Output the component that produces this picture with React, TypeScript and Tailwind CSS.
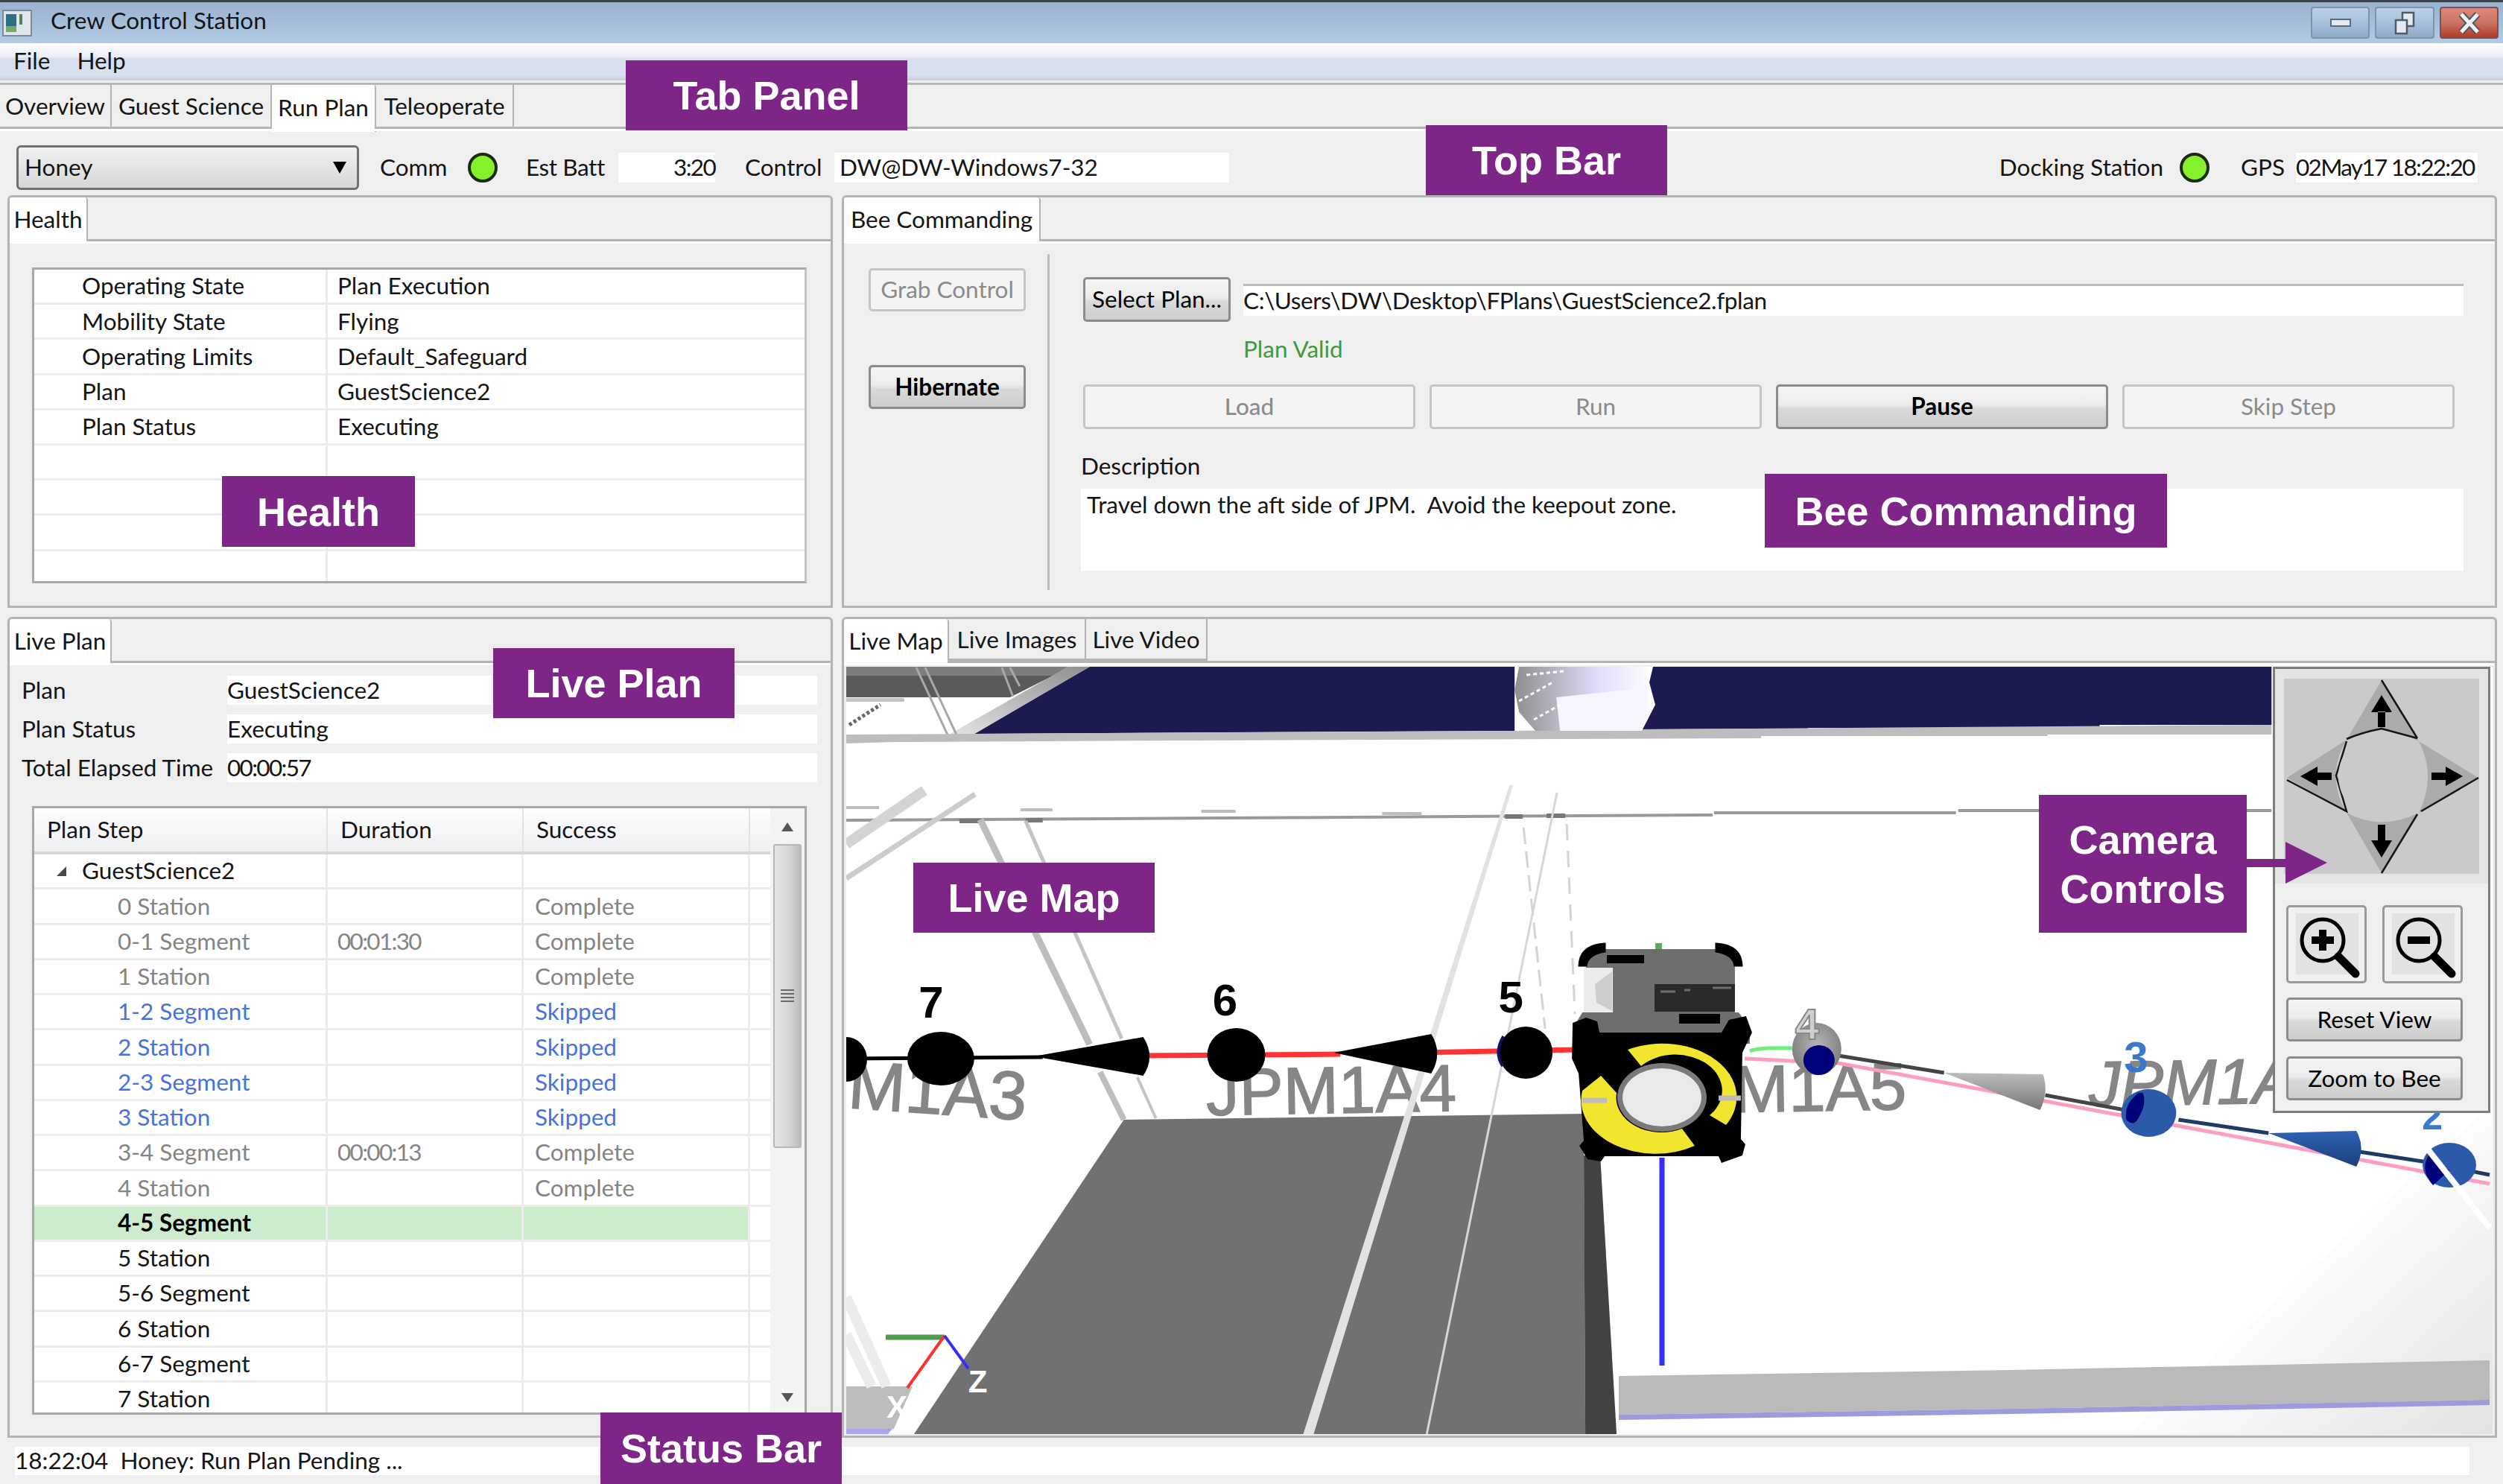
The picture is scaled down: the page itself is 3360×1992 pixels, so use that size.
import React from 'react';

type Tone = 'black' | 'gray' | 'blue' | 'active';

interface Step {
  name: string;
  duration?: string;
  success?: string;
  tone: Tone;
}

const healthRows = [
  ['Operating State', 'Plan Execution'],
  ['Mobility State', 'Flying'],
  ['Operating Limits', 'Default_Safeguard'],
  ['Plan', 'GuestScience2'],
  ['Plan Status', 'Executing'],
  ['', ''],
  ['', ''],
  ['', ''],
  ['', ''],
];

const steps: Step[] = [
  { name: '0 Station', success: 'Complete', tone: 'gray' },
  { name: '0-1 Segment', duration: '00:01:30', success: 'Complete', tone: 'gray' },
  { name: '1 Station', success: 'Complete', tone: 'gray' },
  { name: '1-2 Segment', success: 'Skipped', tone: 'blue' },
  { name: '2 Station', success: 'Skipped', tone: 'blue' },
  { name: '2-3 Segment', success: 'Skipped', tone: 'blue' },
  { name: '3 Station', success: 'Skipped', tone: 'blue' },
  { name: '3-4 Segment', duration: '00:00:13', success: 'Complete', tone: 'gray' },
  { name: '4 Station', success: 'Complete', tone: 'gray' },
  { name: '4-5 Segment', tone: 'active' },
  { name: '5 Station', tone: 'black' },
  { name: '5-6 Segment', tone: 'black' },
  { name: '6 Station', tone: 'black' },
  { name: '6-7 Segment', tone: 'black' },
  { name: '7 Station', tone: 'black' },
];

const toneClass: Record<Tone, string> = {
  black: 'text-[#151515]',
  gray: 'text-[#858585]',
  blue: 'text-[#4673e0]',
  active: 'text-black font-bold bg-[#cdeccd]',
};

const Tab = ({ label, active, w }: { label: string; active?: boolean; w: string }) => (
  <div
    className={`${w} flex items-center justify-center whitespace-nowrap border-r-[2px] border-[#b4b4b4] ${
      active ? 'bg-white h-[calc(100%+4px)] pb-[1px] rounded-t-[4px] self-start' : 'h-full pt-[2px] border-b-[3px] bg-[#efefef]'
    }`}
  >
    {label}
  </div>
);

const Panel = ({
  tabs,
  className,
  children,
}: {
  tabs: { label: string; w: string }[];
  className: string;
  children: React.ReactNode;
}) => (
  <div className={`${className} flex flex-col border-[3px] border-[#b4b4b4] rounded-t-[6px] bg-[#efefef]`}>
    <div className="flex h-[59px] shrink-0 border-b-[3px] border-[#b4b4b4]">
      {tabs.map((t, i) => (
        <Tab key={t.label} label={t.label} w={t.w} active={i === 0} />
      ))}
    </div>
    <div className="flex-1 min-h-0 border-t-[3px] border-white">{children}</div>
  </div>
);

const Btn = ({
  children,
  className,
  disabled,
  strong,
}: {
  children: React.ReactNode;
  className: string;
  disabled?: boolean;
  strong?: boolean;
}) => (
  <div
    className={`${className} flex items-center justify-center rounded-[5px] border-[3px] whitespace-nowrap ${
      disabled
        ? 'border-[#c3c6c9] bg-[#f4f4f4] text-[#8b8b8b]'
        : 'border-[#8c8c8c] bg-[linear-gradient(#f5f5f5,#ececec_45%,#d9d9d9_55%,#cdcdcd)] text-black'
    } ${strong ? 'font-bold' : ''}`}
  >
    {children}
  </div>
);

const Led = ({ className }: { className?: string }) => (
  <div className={`${className ?? ''} w-[40px] h-[40px] shrink-0 rounded-full border-[4px] border-[#1e2a10] bg-[#85f02c]`} />
);

const Callout = ({ className, children }: { className: string; children: React.ReactNode }) => (
  <div
    className={`${className} absolute flex items-center justify-center text-center bg-[#7e2588] text-white font-bold text-[54px] leading-[66px] font-['Liberation_Sans',sans-serif] whitespace-nowrap`}
  >
    {children}
  </div>
);

const HealthTable = () => (
  <div className="mt-[32px] ml-[30px] w-[1040px] h-[424px] border-[3px] border-[#a8a8a8] border-r-[#c4c4c4] bg-white overflow-hidden">
    {healthRows.map((row, i) => (
      <div key={i} className="flex h-[47.2px] border-b-[3px] border-[#ececec] items-center">
        <div className="w-[394px] h-full flex items-center pl-[64px] border-r-[3px] border-[#ececec]">{row[0]}</div>
        <div className="pl-[13px]">{row[1]}</div>
      </div>
    ))}
  </div>
);

const PlanField = ({ label, value, numeric }: { label: string; value: string; numeric?: boolean }) => (
  <div className="flex h-[39px] items-center">
    <div className="w-[292px] pl-[16px] whitespace-nowrap">{label}</div>
    <div className={`flex-1 h-full bg-white flex items-center ${numeric ? 'tracking-[-1.7px]' : ''}`}>{value}</div>
  </div>
);

const StepTable = () => (
  <div className="mt-[32px] ml-[30px] w-[1040px] h-[817px] border-[3px] border-[#a8a8a8] bg-white flex overflow-hidden">
    <div className="w-[988px] shrink-0 flex flex-col">
      <div className="flex h-[62px] shrink-0 border-b-[4px] border-[#d9d9d9] items-center bg-[linear-gradient(#ffffff,#f6f7f8_40%,#eef0f2)]">
        <div className="w-[394px] h-full flex items-center pl-[17px] border-r-[2px] border-[#e3e3e3]">Plan Step</div>
        <div className="w-[263px] h-full flex items-center pl-[17px] border-r-[2px] border-[#e3e3e3]">Duration</div>
        <div className="w-[304px] h-full flex items-center pl-[17px] border-r-[2px] border-[#e3e3e3]">Success</div>
      </div>
      <div className="flex h-[47.25px] shrink-0 items-center border-b-[3px] border-[#ececec]">
        <div className="w-[394px] h-full flex items-center border-r-[3px] border-[#ececec]">
          <svg className="ml-[29px] mr-[19px]" width="16" height="16" viewBox="0 0 16 16">
            <path d="M14 2 L14 15 L1 15 Z" fill="#4a4a4a" />
          </svg>
          GuestScience2
        </div>
        <div className="w-[263px] h-full border-r-[3px] border-[#ececec]" />
        <div className="w-[304px] h-full border-r-[3px] border-[#ececec]" />
      </div>
      {steps.map((s) => (
        <div key={s.name} className="flex h-[47.25px] shrink-0 items-center border-b-[3px] border-[#ececec]">
          <div className={`${toneClass[s.tone]} flex w-[961px] h-full items-center`}>
            <div className="w-[394px] h-full flex items-center pl-[112px] border-r-[3px] border-[#ececec]">{s.name}</div>
            <div className="w-[263px] h-full flex items-center pl-[13px] border-r-[3px] border-[#ececec] tracking-[-1.7px]">{s.duration}</div>
            <div className="w-[304px] h-full flex items-center pl-[15px] border-r-[3px] border-[#ececec]">{s.success}</div>
          </div>
        </div>
      ))}
    </div>
    <div className="flex-1 flex flex-col items-center bg-[#f3f3f3] pt-[2px]">
      <div className="h-[46px] flex items-center justify-center shrink-0">
        <svg width="16" height="12" viewBox="0 0 16 12">
          <path d="M8 0 L16 12 L0 12 Z" fill="#555" />
        </svg>
      </div>
      <div className="w-[38px] h-[408px] shrink-0 rounded-[3px] border-[2px] border-[#b7b7b7] bg-[linear-gradient(90deg,#e6e6e6,#d4d4d4_60%,#bcbcbc)] flex items-center justify-center">
        <svg width="18" height="22" viewBox="0 0 18 22">
          <path d="M0 3 H18 M0 8 H18 M0 13 H18 M0 18 H18" stroke="#6a6a6a" strokeWidth="2" />
        </svg>
      </div>
      <div className="flex-1 flex items-end justify-center pb-[14px]">
        <svg width="16" height="12" viewBox="0 0 16 12">
          <path d="M0 0 L16 0 L8 12 Z" fill="#555" />
        </svg>
      </div>
    </div>
  </div>
);

// 3D map, drawn in full page coordinates through the viewBox
const MapScene = () => (
  <svg className="w-full h-full block" viewBox="1136 894 2212 1030" preserveAspectRatio="none">
    <defs>
      <radialGradient id="greyBall" cx="0.5" cy="0.4" r="0.6">
        <stop offset="0" stopColor="#b5b5b5" />
        <stop offset="1" stopColor="#7a7a7a" />
      </radialGradient>
      <linearGradient id="greyCone" x1="0" y1="0" x2="0" y2="1">
        <stop offset="0" stopColor="#bdbdbd" />
        <stop offset="1" stopColor="#777" />
      </linearGradient>
      <linearGradient id="blueCone" x1="0" y1="0" x2="0" y2="1">
        <stop offset="0" stopColor="#2e62b4" />
        <stop offset="1" stopColor="#1c3f7c" />
      </linearGradient>
      <linearGradient id="corner" x1="0" y1="0" x2="1" y2="1">
        <stop offset="0.45" stopColor="#ffffff" />
        <stop offset="1" stopColor="#e2e2e2" />
      </linearGradient>
      <linearGradient id="dome" x1="0" y1="0" x2="1" y2="0">
        <stop offset="0" stopColor="#8f8f8f" />
        <stop offset="0.4" stopColor="#c4c4d8" />
        <stop offset="0.6" stopColor="#dfe0fb" />
        <stop offset="1" stopColor="#ffffff" />
      </linearGradient>
      <linearGradient id="wallBand" x1="1" y1="0" x2="0" y2="1">
        <stop offset="0" stopColor="#8f8f8f" />
        <stop offset="1" stopColor="#e4e4e4" />
      </linearGradient>
    </defs>
    <rect x="1136" y="894" width="2212" height="1030" fill="#ffffff" />
    <polygon points="2860,1924 3348,1480 3348,1924" fill="url(#corner)" />

    {/* back wall */}
    <polygon points="1136,894 1434,894 1414,906 1136,906" fill="#7d7d7d" />
    <polygon points="1136,906 1414,906 1356,935 1136,935" fill="#5a5a5a" />
    <rect x="1136" y="936" width="78" height="5" fill="#c4c4c4" />
    <polygon points="1463,894 1307,984 1640,982 2034,980 2034,894" fill="#1b1b4f" />
    <polygon points="2201,978 2428,977 2428,976 2820,976 2820,972 3051,972 3051,894 2215,894" fill="#1b1b4f" />
    <polygon points="1434,894 1463,894 1307,985 1274,985" fill="url(#wallBand)" />
    <path d="M1230 895 L1272 985 M1242 895 L1284 985 M1345 895 L1360 934 M1356 895 L1369 920" stroke="#a8a8a8" strokeWidth="3" />
    <path d="M1140 972 L1182 945" stroke="#666" strokeWidth="5" strokeDasharray="4 3" />
    <polygon
      points="1136,985 1307,984 2034,980 2201,978 3051,972 3051,985 2750,985 2750,987 2365,987 2365,990 1595,993 1200,995 1136,997"
      fill="#bdbdbd"
    />
    <polygon points="2040,894 2034,925 2040,955 2062,980 2205,980 2223,945 2215,915 2220,894" fill="url(#dome)" />
    <polygon points="2090,935 2215,922 2205,980 2095,980" fill="#f6f6ff" />
    <path d="M2050 905 L2100 900 M2040 940 L2085 915 M2060 965 L2095 945" stroke="#fff" strokeWidth="3" strokeDasharray="5 4" />

    {/* floor lines */}
    <path d="M1136 1100 L1640 1097 L2300 1093 M2302 1090 H2627 M2630 1087 H3051" stroke="#999" strokeWidth="4" fill="none" />
    <path d="M1136 1083 H1180 M1370 1086 H1413 M1613 1088 H1659 M1856 1091 H1909" stroke="#bdbdbd" strokeWidth="4" />
    <path d="M1288 1101 H1318 M1377 1100 H1400 M2021 1095 H2045 M2077 1094 H2102" stroke="#777" strokeWidth="6" />
    <path d="M1136 1132 L1241 1060" stroke="#d4d4d4" strokeWidth="14" />
    <path d="M1136 1178 L1309 1065" stroke="#cccccc" strokeWidth="7" />
    <path d="M1316 1099 L1463 1401" stroke="#bdbdbd" strokeWidth="9" />
    <path d="M1377 1101 L1506 1393" stroke="#c4c4c4" strokeWidth="5" />
    <path d="M1477 1438 L1509 1502" stroke="#bdbdbd" strokeWidth="8" />
    <path d="M1527 1445 L1552 1500" stroke="#c4c4c4" strokeWidth="4" />
    <path d="M2046 1110 L2075 1380" stroke="#d4d4d4" strokeWidth="3" strokeDasharray="22 10" />
    <path d="M2104 1105 L2115 1360" stroke="#d4d4d4" strokeWidth="3" strokeDasharray="22 14" />

    {/* labels on the far structure */}
    <g fontFamily="'Liberation Sans', sans-serif" fontSize="89" fill="#868686" stroke="#868686" strokeWidth="1.5">
      <text x="1137" y="1486" fontSize="92" transform="rotate(4 1137 1486)">M1A3</text>
      <text x="1620" y="1496" transform="rotate(-1 1620 1496)">JPM1A4</text>
      <text x="2561" y="1488" textAnchor="end" transform="rotate(-1 2561 1488)">M1A5</text>
      <text x="2806" y="1484" fontStyle="italic" fontSize="86" transform="rotate(-1 2806 1484)">JPM1A</text>
    </g>

    {/* floor block */}
    <polygon points="1509,1502 2127,1494 2129,1924 1227,1924" fill="#717171" />
    <polygon points="2127,1550 2149,1550 2171,1924 2129,1924" fill="#424242" />
    <polygon points="2027,1053 2032,1053 1764,1924 1750,1924" fill="#e2e2e2" />
    <path d="M2091 1063 L1916 1924" stroke="#d6d6d6" strokeWidth="3" />

    {/* bottom strip */}
    <polygon points="2174,1846 2700,1838 3344,1825 3344,1878 2700,1890 2174,1898" fill="#bababa" />
    <polygon points="2174,1898 2700,1890 3344,1878 3344,1885 2700,1897 2174,1905" fill="#9c9cdc" />
    <polygon points="1136,1860 1225,1860 1200,1917 1136,1917" fill="#bdbdbd" />
    <polygon points="1136,1917 1198,1917 1192,1924 1136,1924" fill="#a8a8ec" />
    <path d="M1136 1740 L1190 1860 M1136 1790 L1170 1860" stroke="#ececec" strokeWidth="14" />

    {/* axes */}
    <path d="M1268 1794 L1189 1794" stroke="#4d9d4d" strokeWidth="7" />
    <path d="M1268 1792 L1218 1862" stroke="#ff3030" strokeWidth="4" />
    <path d="M1268 1792 L1300 1836" stroke="#3030ff" strokeWidth="4" />
    <g fontFamily="'Liberation Sans', sans-serif" fontSize="42" fontWeight="700" fill="#ffffff">
      <text x="1190" y="1902">X</text>
      <text x="1300" y="1868">Z</text>
    </g>

    {/* plan path behind the bee */}
    <path d="M1136 1420 L1400 1418" stroke="#000" strokeWidth="5" />
    <path d="M1536 1416 L1800 1414 M1900 1412 L2120 1408" stroke="#ff3333" strokeWidth="7" />
    <ellipse cx="1136" cy="1421" rx="28" ry="30" fill="#000" />
    <ellipse cx="1263" cy="1420" rx="45" ry="36" fill="#000" />
    <path d="M1388 1417 L1535 1391 Q1552 1417 1535 1443 Z" fill="#000" />
    <ellipse cx="1660" cy="1415" rx="39" ry="36" fill="#000" />
    <path d="M1791 1412 L1922 1387 Q1938 1413 1922 1440 Z" fill="#000" />
    <ellipse cx="2049" cy="1412" rx="36" ry="35" fill="#000" />
    <path d="M2019 1390 Q2006 1412 2018 1430" stroke="#10106a" strokeWidth="4" fill="none" />
    <g fontFamily="'Liberation Sans', sans-serif" fontSize="60" fontWeight="700" fill="#000">
      <text x="1250" y="1365" textAnchor="middle">7</text>
      <text x="1645" y="1362" textAnchor="middle">6</text>
      <text x="2029" y="1358" textAnchor="middle">5</text>
    </g>

    {/* path ahead of the bee */}
    <path d="M2343 1420 L2469 1426 L2854 1497 L3344 1588" stroke="#ff9cc4" strokeWidth="5" fill="none" />
    <path d="M2350 1410 Q2360 1405 2407 1406" stroke="#6cef7a" strokeWidth="5" fill="none" />
    <path d="M2469 1416 L2611 1439 M2747 1469 L2854 1489" stroke="#444" strokeWidth="5" fill="none" />
    <path d="M2926 1502 L3047 1520 M3169 1545 L3254 1558 L3344 1576" stroke="#1f3a66" strokeWidth="5" fill="none" />
    <ellipse cx="2440" cy="1407" rx="33" ry="35" fill="url(#greyBall)" />
    <ellipse cx="2443" cy="1422" rx="21" ry="20" fill="#00007a" />
    <text x="2427" y="1394" textAnchor="middle" fontFamily="'Liberation Sans', sans-serif" fontSize="58" fontWeight="700" fill="#cfcfcf" stroke="#888" strokeWidth="2">4</text>
    <path d="M2611 1439 L2744 1441 Q2752 1465 2740 1489 Z" fill="url(#greyCone)" />
    <ellipse cx="2886" cy="1493" rx="37" ry="32" fill="#2a5aa8" />
    <path d="M2872 1466 Q2852 1482 2856 1502 Q2866 1512 2872 1500 Q2884 1480 2878 1466 Z" fill="#00007a" />
    <text x="2869" y="1438" textAnchor="middle" fontFamily="'Liberation Sans', sans-serif" fontSize="58" fontWeight="700" fill="#3a78cf">3</text>
    <path d="M3047 1520 L3165 1517 Q3178 1540 3165 1565 Z" fill="url(#blueCone)" />
    <ellipse cx="3290" cy="1563" rx="36" ry="30" fill="#2a5aa8" />
    <path d="M3262 1550 Q3250 1570 3268 1590 L3290 1570 Z" fill="#00007a" />
    <path d="M3240 1515 L3344 1647" stroke="#ffffff" strokeWidth="8" />
    <text x="3267" y="1515" textAnchor="middle" fontFamily="'Liberation Sans', sans-serif" fontSize="50" fontWeight="700" fill="#3a78cf">2</text>

    {/* bee */}
    <path d="M2232 1553 V1832" stroke="#3030ff" strokeWidth="7" />
    <rect x="2223" y="1265" width="9" height="9" fill="#5aab5a" />
    <rect x="2130" y="1273" width="200" height="86" fill="#6e6e6e" />
    <path d="M2121 1295 Q2122 1268 2155 1266 L2155 1276 Q2132 1280 2130 1295 Z" fill="#000" stroke="#000" strokeWidth="3" />
    <path d="M2339 1295 Q2338 1268 2305 1266 L2305 1276 Q2328 1280 2330 1295 Z" fill="#000" stroke="#000" strokeWidth="3" />
    <rect x="2158" y="1281" width="50" height="11" fill="#000" />
    <rect x="2127" y="1298" width="39" height="60" fill="#ececec" />
    <polygon points="2142,1320 2165,1303 2165,1356 2144,1345" fill="#cdcdcd" />
    <rect x="2222" y="1320" width="108" height="37" fill="#2a2a2a" />
    <path d="M2230 1330 H2250 M2262 1328 H2270 M2300 1325 H2325" stroke="#6e6e6e" strokeWidth="3" />
    <polygon points="2125,1358 2335,1358 2350,1378 2350,1400 2120,1400 2113,1378" fill="#6e6e6e" />
    <rect x="2255" y="1360" width="55" height="13" fill="#000" />
    <path
      d="M2112 1372 L2130 1365 L2145 1370 L2148 1385 L2312 1385 L2322 1368 L2345 1363 L2353 1385 L2340 1412 L2338 1528 L2344 1535 L2340 1550 L2312 1560 L2308 1551 L2155 1551 L2150 1558 L2132 1555 L2121 1537 L2127 1530 L2120 1440 L2111 1420 Z"
      fill="#000"
    />
    <path d="M2186 1408 A 100 72 0 0 1 2318 1509 L 2296 1496 A 61 47 0 0 0 2204 1430 Z" fill="#f2e52e" />
    <path d="M2276 1537 A 100 72 0 0 1 2125 1463 L 2150 1443 L 2171 1466 A 61 47 0 0 0 2259 1514 Z" fill="#f2e52e" />
    <ellipse cx="2232" cy="1472" rx="60" ry="46" fill="#7a7a7a" />
    <ellipse cx="2232" cy="1472" rx="53" ry="39" fill="#e9e9e9" />
    <path d="M2125 1476 H2158 M2308 1473 H2338" stroke="#bdbdbd" strokeWidth="7" />
  </svg>
);

const Wedge = ({ d, edge }: { d: string; edge: string }) => (
  <>
    <path d={d} fill="#a9ada9" />
    <path d={edge} fill="none" stroke="#151515" strokeWidth="2.5" />
  </>
);

const CameraPad = () => (
  <svg width="262" height="262" viewBox="0 0 262 262">
    <rect width="262" height="262" fill="#cacaca" />
    <Wedge d="M131 2 L181 84 Q131 55 84 82 Z" edge="M131 2 L179 80 M84 81 Q105 72 131 67 L179 80" />
    <Wedge d="M261 133 L181 180 Q205 131 181 84 Z" edge="M261 133 L184 178" />
    <Wedge d="M131 261 L84 180 Q131 205 181 180 Z" edge="M131 261 L179 182" />
    <Wedge d="M4 133 L84 82 Q55 131 84 180 Z" edge="M4 136 L84 178 L70 130 L84 84" />
    <circle cx="131" cy="131" r="58" fill="#cacaca" />
    <path d="M126 44 H136 V65 H126 Z M131 22 L117 45 H145 Z" fill="#000" />
    <path d="M126 196 H136 V218 H126 Z M131 240 L117 217 H145 Z" fill="#000" />
    <path d="M64 126 V136 H44 V126 Z M22 131 L45 118 V144 Z" fill="#000" />
    <path d="M198 126 V136 H220 V126 Z M240 131 L217 118 V144 Z" fill="#000" />
  </svg>
);

const ZoomIcon = ({ plus }: { plus?: boolean }) => (
  <svg width="102" height="99" viewBox="0 0 102 99">
    <rect x="10" y="8" width="84" height="82" fill="#e2e2e2" />
    <circle cx="46" cy="44" r="28" fill="none" stroke="#000" strokeWidth="5" />
    <path d="M67 66 L90 89" stroke="#000" strokeWidth="11" strokeLinecap="round" />
    <path d="M31 44 H61" stroke="#000" strokeWidth="10" />
    {plus && <path d="M46 30 V58" stroke="#000" strokeWidth="10" />}
  </svg>
);

const CameraControls = () => (
  <div className="absolute right-[6px] top-[0px] w-[292px] h-[599px] border-[3px] border-[#7d7d7d] bg-[#efefef]">
    <div className="bg-[#e4e4e4] h-[288px] pt-[13px] pl-[12px] border-b-0">
      <CameraPad />
    </div>
    <div className="flex justify-between pl-[15px] pr-[34px] mt-[29px]">
      <div className="w-[108px] h-[105px] rounded-[5px] border-[3px] border-[#9a9a9a] bg-[#f0f0f0]">
        <ZoomIcon plus />
      </div>
      <div className="w-[108px] h-[105px] rounded-[5px] border-[3px] border-[#9a9a9a] bg-[#f0f0f0]">
        <ZoomIcon />
      </div>
    </div>
    <div className="flex flex-col gap-[20px] pl-[15px] pr-[34px] mt-[19px]">
      <Btn className="h-[59px]">Reset View</Btn>
      <Btn className="h-[59px]">Zoom to Bee</Btn>
    </div>
  </div>
);

const WinBtn = ({ w, className, children }: { w: string; className: string; children: React.ReactNode }) => (
  <div className={`${w} ${className} h-[43px] rounded-[4px] border-[2px] flex items-center justify-center`}>{children}</div>
);

export default function App() {
  return (
    <div className="relative w-[3360px] h-[1992px] overflow-hidden flex flex-col bg-[#efefef] text-[#151515] text-[31.5px] leading-none font-['Lato','Liberation_Sans',sans-serif]">
      {/* window title */}
      <div className="h-[58px] shrink-0 flex items-center border-t-[3px] border-[#39424b] bg-[linear-gradient(#98b2cf,#b2cbe6)]">
        <svg className="ml-[3px]" width="40" height="36" viewBox="0 0 40 36">
          <rect x="1" y="1" width="38" height="34" fill="#dfe5ec" stroke="#7f8a95" strokeWidth="2" />
          <rect x="5" y="6" width="14" height="24" fill="#2f6f86" />
          <rect x="23" y="6" width="4" height="14" fill="#5a7f58" />
          <rect x="5" y="22" width="14" height="8" fill="#7aa56b" />
        </svg>
        <span className="ml-[25px] pb-[6px]">Crew Control Station</span>
        <div className="ml-auto mr-[6px] flex gap-[7px]">
          <WinBtn w="w-[79px]" className="border-[#7f93a9] bg-[linear-gradient(#bcd1e8,#a6c0dc_50%,#8faac8)]">
            <div className="w-[28px] h-[11px] border-[2px] border-[#5f6b78] bg-[#e6e9ed]" />
          </WinBtn>
          <WinBtn w="w-[80px]" className="border-[#7f93a9] bg-[linear-gradient(#bcd1e8,#a6c0dc_50%,#8faac8)]">
            <svg width="30" height="32" viewBox="0 0 30 32">
              <rect x="12" y="2" width="15" height="18" fill="#e6e9ed" stroke="#4f5b68" strokeWidth="2.5" />
              <rect x="3" y="12" width="15" height="18" fill="#e6e9ed" stroke="#4f5b68" strokeWidth="2.5" />
            </svg>
          </WinBtn>
          <WinBtn w="w-[79px]" className="border-[#8a4a48] bg-[linear-gradient(#d9897c,#c97565_50%,#b33a26)]">
            <svg width="32" height="30" viewBox="0 0 32 30">
              <path d="M5 3 L27 27 M27 3 L5 27" stroke="#4f5560" strokeWidth="9" />
              <path d="M5 3 L27 27 M27 3 L5 27" stroke="#eef0f2" strokeWidth="5" />
            </svg>
          </WinBtn>
        </div>
      </div>

      {/* menu */}
      <div className="h-[50px] shrink-0 flex items-center gap-[36px] pl-[18px] pb-[2px] bg-[linear-gradient(#ffffff,#e9edf6_38%,#d8dfee_40%,#d8dfee_85%,#c8cedd)]">
        <span>File</span>
        <span>Help</span>
      </div>

      {/* main tabs */}
      <div className="h-[65px] shrink-0 pt-[3px] border-b-0">
        <div className="flex h-full border-t-[3px] border-[#b8b8b8]">
          <Tab label="Overview" w="w-[150px]" />
          <Tab label="Guest Science" w="w-[215px]" />
          <Tab label="Run Plan" w="w-[140px]" active />
          <Tab label="Teleoperate" w="w-[185px]" />
          <div className="flex-1 h-full border-b-[3px] border-[#b4b4b4]" />
        </div>
      </div>

      {/* top bar */}
      <div className="h-[89px] shrink-0 flex items-center pl-[22px] pr-[34px] pt-[12px] border-t-[3px] border-white">
        <div className="w-[460px] h-[60px] rounded-[6px] border-[3px] border-[#707070] bg-[linear-gradient(#f2f2f2,#e6e6e6_45%,#d6d6d6)] flex items-center justify-between pl-[8px] pr-[14px]">
          Honey
          <svg width="18" height="16" viewBox="0 0 18 16">
            <path d="M0 0 H18 L9 16 Z" fill="#000" />
          </svg>
        </div>
        <span className="ml-[28px] w-[118px]">Comm</span>
        <Led />
        <span className="ml-[38px] w-[124px] whitespace-nowrap tracking-[-0.4px]">Est Batt</span>
        <div className="w-[130px] h-[40px] bg-white flex items-center justify-end tracking-[-1.7px]">3:20</div>
        <span className="ml-[40px] w-[120px]">Control</span>
        <div className="w-[530px] h-[40px] bg-white flex items-center pl-[7px]">DW@DW-Windows7-32</div>
        <span className="ml-auto whitespace-nowrap">Docking Station</span>
        <Led className="ml-[22px]" />
        <span className="ml-[42px] w-[74px]">GPS</span>
        <div className="w-[244px] h-[40px] bg-white flex items-center whitespace-nowrap tracking-[-1.7px]">02May17 18:22:20</div>
      </div>

      {/* panels */}
      <div className="flex gap-[12px] pl-[10px] pr-[8px]">
        <div className="w-[1108px] flex flex-col gap-[12px]">
          <Panel className="h-[554px]" tabs={[{ label: 'Health', w: 'w-[105px]' }]}>
            <HealthTable />
          </Panel>
          <Panel className="h-[1102px]" tabs={[{ label: 'Live Plan', w: 'w-[137px]' }]}>
            <div className="pt-[14px] flex flex-col gap-[13px] pr-[18px]">
              <PlanField label="Plan" value="GuestScience2" />
              <PlanField label="Plan Status" value="Executing" />
              <PlanField label="Total Elapsed Time" value="00:00:57" numeric />
            </div>
            <StepTable />
          </Panel>
        </div>

        <div className="flex-1 flex flex-col gap-[12px]">
          <Panel className="h-[554px]" tabs={[{ label: 'Bee Commanding', w: 'w-[264px]' }]}>
            <div className="flex h-full">
              <div className="w-[276px] h-[451px] mt-[14px] border-r-[3px] border-[#bdbdbd] pl-[33px]">
                <Btn disabled className="w-[211px] h-[58px] mt-[19px]">Grab Control</Btn>
                <Btn strong className="w-[211px] h-[59px] mt-[72px]">Hibernate</Btn>
              </div>
              <div className="flex-1 pl-[45px] pr-[42px]">
                <div className="flex items-center mt-[45px]">
                  <Btn className="w-[198px] h-[60px]">Select Plan...</Btn>
                  <div className="ml-[17px] flex-1 h-[43px] bg-white border-t-[3px] border-[#bdbdbd] flex items-center tracking-[-0.37px]">
                    C:\Users\DW\Desktop\FPlans\GuestScience2.fplan
                  </div>
                </div>
                <div className="ml-[215px] mt-[22px] h-[30px] flex items-center text-[#3f9a3a]">Plan Valid</div>
                <div className="flex gap-[19px] mt-[32px] pr-[12px]">
                  <Btn disabled className="flex-1 h-[60px] font-medium">Load</Btn>
                  <Btn disabled className="flex-1 h-[60px]">Run</Btn>
                  <Btn strong className="flex-1 h-[60px]">Pause</Btn>
                  <Btn disabled className="flex-1 h-[60px]">Skip Step</Btn>
                </div>
                <div className="mt-[35px] h-[30px] flex items-center -ml-[3px]">Description</div>
                <div className="mt-[15px] -ml-[3px] h-[110px] bg-white pl-[8px] pt-[6px] whitespace-pre">
                  Travel down the aft side of JPM.  Avoid the keepout zone.
                </div>
              </div>
            </div>
          </Panel>
          <Panel
            className="h-[1102px]"
            tabs={[
              { label: 'Live Map', w: 'w-[141px]' },
              { label: 'Live Images', w: 'w-[184px]' },
              { label: 'Live Video', w: 'w-[163px]' },
            ]}
          >
            <div className="relative h-full">
              <div className="h-[1030px] mx-[3px] mt-[2px]">
                <MapScene />
              </div>
              <CameraControls />
            </div>
          </Panel>
        </div>
      </div>

      {/* status bar */}
      <div className="flex-1 pl-[20px] pr-[45px] pt-[12px]">
        <div className="h-[38px] bg-white flex items-center whitespace-pre">18:22:04  Honey: Run Plan Pending ...</div>
      </div>

      {/* annotations */}
      <Callout className="left-[840px] top-[81px] w-[378px] h-[94px]">Tab Panel</Callout>
      <Callout className="left-[1914px] top-[168px] w-[324px] h-[94px]">Top Bar</Callout>
      <Callout className="left-[298px] top-[639px] w-[259px] h-[95px]">Health</Callout>
      <Callout className="left-[2369px] top-[636px] w-[540px] h-[99px]">Bee Commanding</Callout>
      <Callout className="left-[662px] top-[870px] w-[324px] h-[94px]">Live Plan</Callout>
      <Callout className="left-[1226px] top-[1158px] w-[324px] h-[94px]">Live Map</Callout>
      <Callout className="left-[2737px] top-[1067px] w-[279px] h-[185px]">
        Camera
        <br />
        Controls
      </Callout>
      <svg className="absolute left-[3016px] top-[1130px]" width="108" height="56" viewBox="0 0 108 56">
        <path d="M0 23 H52 V0 L108 28 L52 56 V34 H0 Z" fill="#7e2588" />
      </svg>
      <Callout className="left-[806px] top-[1896px] w-[324px] h-[96px]">Status Bar</Callout>
    </div>
  );
}
